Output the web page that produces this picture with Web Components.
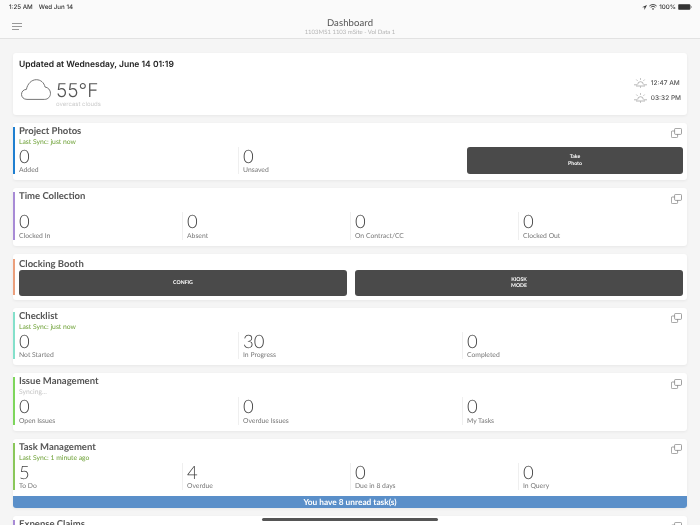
<!DOCTYPE html>
<html>
<head>
<meta charset="utf-8">
<title>Dashboard</title>
<style>
  html, body {
    margin: 0;
    height: 525px;
    overflow: hidden;
    background: #f5f5f5;
    font-family: Lato, "Liberation Sans", sans-serif;
  }
  body {
    text-rendering: geometricPrecision;
    filter: blur(.3px);
  }
  main-page {
    display: flex;
    flex-direction: column;
    gap: 8px;
    padding: 14px 13px 0;
  }
</style>
</head>
<body>
<app-header></app-header>
<main-page>
  <weather-card></weather-card>

  <dash-card accent="#1f7fd0" heading="Project Photos" sync="Last Sync: just now" copy>
    <dash-stats cols="3">
      <dash-stat value="0" label="Added"></dash-stat>
      <dash-stat value="0" label="Unsaved"></dash-stat>
      <dash-button>Take<br>Photo</dash-button>
    </dash-stats>
  </dash-card>

  <dash-card accent="#a88bd6" heading="Time Collection" sync=" " copy>
    <dash-stats cols="4">
      <dash-stat value="0" label="Clocked In"></dash-stat>
      <dash-stat value="0" label="Absent"></dash-stat>
      <dash-stat value="0" label="On Contract/CC"></dash-stat>
      <dash-stat value="0" label="Clocked Out"></dash-stat>
    </dash-stats>
  </dash-card>

  <dash-card accent="#eb9f7c" heading="Clocking Booth" compact>
    <button-pair>
      <dash-button>CONFIG</dash-button>
      <dash-button>KIOSK<br>MODE</dash-button>
    </button-pair>
  </dash-card>

  <dash-card accent="#84e0cb" heading="Checklist" sync="Last Sync: just now" copy>
    <dash-stats cols="3">
      <dash-stat value="0" label="Not Started"></dash-stat>
      <dash-stat value="30" label="In Progress"></dash-stat>
      <dash-stat value="0" label="Completed"></dash-stat>
    </dash-stats>
  </dash-card>

  <dash-card accent="#7ed65c" heading="Issue Management" sync="Syncing..." syncing copy>
    <dash-stats cols="3">
      <dash-stat value="0" label="Open Issues"></dash-stat>
      <dash-stat value="0" label="Overdue Issues"></dash-stat>
      <dash-stat value="0" label="My Tasks"></dash-stat>
    </dash-stats>
  </dash-card>

  <dash-card accent="#8ac75a" heading="Task Management" sync="Last Sync: 1 minute ago" banner="You have 8 unread task(s)" copy>
    <dash-stats cols="4">
      <dash-stat value="5" label="To Do"></dash-stat>
      <dash-stat value="4" label="Overdue"></dash-stat>
      <dash-stat value="0" label="Due in 8 days"></dash-stat>
      <dash-stat value="0" label="In Query"></dash-stat>
    </dash-stats>
  </dash-card>

  <dash-card accent="#a88bd6" heading="Expense Claims" sync=" " copy></dash-card>
</main-page>
<home-bar></home-bar>

<script>
// Top of the screen: status bar + title bar
class AppHeader extends HTMLElement {
  constructor() {
    super();
    this.attachShadow({ mode: 'open' });
    this.shadowRoot.innerHTML = `
    <style>
      :host {
        display: block;
        height: 38px;
        background: #fafafa;
        border-bottom: 1px solid #e2e2e2;
      }
      .status {
        display: flex;
        align-items: center;
        height: 14px;
        padding: 0 8px 0 9px;
        font: 500 6.2px Inter, sans-serif;
        color: #333;
      }
      .date { margin-left: 6px; }
      .right {
        margin-left: auto;
        display: flex;
        align-items: center;
        gap: 2px;
      }
      .bar {
        display: grid;
        grid-template-columns: 60px 1fr 60px;
        align-items: center;
        height: 24px;
      }
      .menu {
        display: flex;
        flex-direction: column;
        gap: 2px;
        padding-left: 12px;
      }
      .menu i {
        display: block;
        width: 10px;
        height: 1px;
        background: #999;
      }
      .menu i:last-child { width: 7px; }
      .titles {
        text-align: center;
        padding-top: 1px;
      }
      h1 {
        margin: 0;
        font: 400 9.5px/11px Lato, sans-serif;
        color: #555;
        letter-spacing: .1px;
      }
      p {
        margin: 0;
        font: 400 6px/7px Lato, sans-serif;
        color: #b5b5b5;
      }
    </style>
    <div class="status">
      <span>1:25 AM</span><span class="date">Wed Jun 14</span>
      <div class="right">
        <svg width="5" height="5" viewBox="0 0 5 5"><path d="M5 0 0 2.300h2.400V5z" fill="#333"/></svg>
        <svg width="8" height="6" viewBox="0 0 8 6" fill="none" stroke="#333" stroke-width=".9"><path d="M.4 2a5.200 5.200 0 0 1 7.200 0M1.700 3.300a3.300 3.300 0 0 1 4.600 0"/><path d="M4 6 2.900 4.700a1.600 1.600 0 0 1 2.200 0z" fill="#333" stroke="none"/></svg>
        <span>100%</span>
        <svg width="14" height="6" viewBox="0 0 14 6"><rect x=".3" y=".3" width="11.900" height="5.400" rx="1.200" fill="#333" stroke="#555" stroke-width=".5"/><rect x="12.800" y="2" width=".9" height="2" fill="#999"/></svg>
      </div>
    </div>
    <div class="bar">
      <div class="menu"><i></i><i></i><i></i></div>
      <div class="titles">
        <h1>Dashboard</h1>
        <p>1103MS1 1103 mSite - Vol Data 1</p>
      </div>
    </div>
    `;
  }
}

class WeatherCard extends HTMLElement {
  constructor() {
    super();
    this.attachShadow({ mode: 'open' });
    const sun = `<svg width="13" height="10" viewBox="0 0 13 10" fill="none" stroke="#888" stroke-width=".6">
      <path d="M3.700 6.500a2.800 2.800 0 0 1 5.600 0M0 6.800h3.200M9.800 6.800H13M2 8h9M6.500 .2v1.600M2.400 1.600l1.100 1.200M10.600 1.600 9.500 2.800M6.500 8.400v1.400"/>
    </svg>`;
    this.shadowRoot.innerHTML = `
    <style>
      :host {
        display: flex;
        justify-content: space-between;
        height: 61.5px;
        box-sizing: border-box;
        padding: 6px 6px 0;
        background: #fff;
        border-radius: 3px;
        box-shadow: 0 1px 3px rgba(0,0,0,.06);
      }
      h2 {
        margin: 0;
        font: 600 8.5px/12px Inter, sans-serif;
        color: #222;
      }
      .now {
        display: flex;
        align-items: flex-start;
        margin: 7px 0 0 2px;
        gap: 5px;
      }
      .temp {
        font: 300 19px/20px Inter, sans-serif;
        color: #555;
        padding-top: 3px;
      }
      .desc {
        font: 400 6px/8px Inter, sans-serif;
        color: #ccc;
      }
      .sun {
        align-self: flex-end;
        display: flex;
        flex-direction: column;
        gap: 5px;
        padding-bottom: 11.5px;
      }
      .sun div {
        display: flex;
        align-items: center;
        gap: 4px;
        font: 500 6.5px/10px Inter, sans-serif;
        color: #555;
      }
    </style>
    <div>
      <h2>Updated at Wednesday, June 14 01:19</h2>
      <div class="now">
        <svg width="30" height="21" viewBox="0 0 30 21" fill="none" stroke="#666" stroke-width=".9" style="margin-top:1px">
          <path d="M6 20.400C2.600 20.400.5 18 .5 15.400c0-2.800 2-4.900 4.900-5C6.500 4.800 10.500.7 15.300.7c4.400 0 7.800 2.900 8.700 7.300 3.100.4 5.500 3 5.500 6.300 0 3.400-2.600 6.100-5.900 6.100z"/>
        </svg>
        <div>
          <div class="temp">55°F</div>
          <div class="desc">overcast clouds</div>
        </div>
      </div>
    </div>
    <div class="sun">
      <div>${sun}<span>12:47 AM</span></div>
      <div>${sun}<span>03:32 PM</span></div>
    </div>
    `;
  }
}

// One module card: coloured strip, title, optional sync line, slot for the content
class DashCard extends HTMLElement {
  constructor() {
    super();
    this.attachShadow({ mode: 'open' });
  }

  connectedCallback() {
    const sync = this.getAttribute('sync');
    const banner = this.getAttribute('banner');
    const copy = `<svg class="copy" width="11" height="10" viewBox="0 0 11 10" fill="none" stroke="#777" stroke-width=".7">
      <rect x="3.600" y=".4" width="6.900" height="6" rx="1"/>
      <path d="M3.600 3H1.400a1 1 0 0 0-1 1v4.600a1 1 0 0 0 1 1h4.200a1 1 0 0 0 1-1V6.400"/>
    </svg>`;
    this.shadowRoot.innerHTML = `
    <style>
      :host {
        display: block;
        position: relative;
        background: #fff;
        border-radius: 3px;
        box-shadow: 0 1px 3px rgba(0,0,0,.06);
      }
      .main { display: flex; }
      .strip {
        flex: none;
        width: 2px;
        margin: 4px 0 6px;
        background: ${this.getAttribute('accent')};
      }
      .body {
        flex: 1;
        min-width: 0;
        padding: 4px 0 6px;
      }
      :host([compact]) .strip { margin: 5px 0; }
      :host([compact]) .body { padding: 5px 0 4px; }
      h3 {
        margin: 0 0 0 4px;
        font: 700 9.5px/10px Lato, sans-serif;
        color: #555;
      }
      :host([compact]) h3 { line-height: 11px; }
      .sync {
        margin-left: 4px;
        font: 400 6.8px/10px Lato, sans-serif;
        color: #6ca034;
        white-space: pre;
      }
      :host([syncing]) .sync { color: #c4c4c4; }
      .copy {
        position: absolute;
        top: 5.5px;
        right: 5px;
      }
      .banner {
        height: 12px;
        background: #5a8fc9;
        border-radius: 0 0 3px 3px;
        text-align: center;
        font: 700 8.3px/12px Lato, sans-serif;
        color: #fff;
      }
    </style>
    <div class="main">
      <div class="strip"></div>
      <div class="body">
        <h3>${this.getAttribute('heading')}</h3>
        ${sync ? `<div class="sync">${sync}</div>` : ''}
        <slot></slot>
      </div>
    </div>
    ${banner ? `<div class="banner">${banner}</div>` : ''}
    ${this.hasAttribute('copy') ? copy : ''}
    `;
  }
}

class DashStats extends HTMLElement {
  constructor() {
    super();
    this.attachShadow({ mode: 'open' });
  }

  connectedCallback() {
    this.shadowRoot.innerHTML = `
    <style>
      :host {
        display: grid;
        grid-template-columns: repeat(${this.getAttribute('cols')}, 1fr);
        height: 27.5px;
        margin: 0 1px 0 -1px;
      }
    </style>
    <slot></slot>
    `;
  }
}

class DashStat extends HTMLElement {
  constructor() {
    super();
    this.attachShadow({ mode: 'open' });
  }

  connectedCallback() {
    this.shadowRoot.innerHTML = `
    <style>
      :host {
        display: block;
        padding-left: 4px;
        border-left: 1px solid #efefef;
      }
      :host(:first-child) { border-left-color: transparent; }
      .value {
        font: 300 18.5px/19.5px Lato, sans-serif;
        color: #444;
      }
      .label {
        font: 400 6.8px/8px Lato, sans-serif;
        color: #777;
      }
    </style>
    <div class="value">${this.getAttribute('value')}</div>
    <div class="label">${this.getAttribute('label')}</div>
    `;
  }
}

class DashButton extends HTMLElement {
  constructor() {
    super();
    this.attachShadow({ mode: 'open' });
    this.shadowRoot.innerHTML = `
    <style>
      :host {
        display: flex;
        align-items: center;
        justify-content: center;
        box-sizing: border-box;
        min-height: 26px;
        padding-top: 1px;
        margin-left: 5px;
        margin-right: 3px;
        background: #4a4a4a;
        border-radius: 3px;
        text-align: center;
        font: 700 5.2px/6.5px Lato, sans-serif;
        color: #fff;
      }
      :host-context(button-pair) { margin: 0; }
    </style>
    <div><slot></slot></div>
    `;
  }
}

class ButtonPair extends HTMLElement {
  constructor() {
    super();
    this.attachShadow({ mode: 'open' });
    this.shadowRoot.innerHTML = `
    <style>
      :host {
        display: grid;
        grid-template-columns: 1fr 1fr;
        gap: 8px;
        margin: 0 4px;
      }
    </style>
    <slot></slot>
    `;
  }
}

// iPad home indicator, lies over the page
class HomeBar extends HTMLElement {
  constructor() {
    super();
    this.attachShadow({ mode: 'open' });
    this.shadowRoot.innerHTML = `
    <style>
      :host {
        position: fixed;
        left: 262px;
        top: 518px;
        width: 176px;
        height: 3px;
        border-radius: 2px;
        background: #555;
      }
    </style>
    `;
  }
}

class MainPage extends HTMLElement {
  constructor() {
    super();
    this.attachShadow({ mode: 'open' });
    this.shadowRoot.innerHTML = `<slot></slot>`;
  }
}

customElements.define('app-header', AppHeader);
customElements.define('weather-card', WeatherCard);
customElements.define('dash-card', DashCard);
customElements.define('dash-stats', DashStats);
customElements.define('dash-stat', DashStat);
customElements.define('dash-button', DashButton);
customElements.define('button-pair', ButtonPair);
customElements.define('home-bar', HomeBar);
customElements.define('main-page', MainPage);
</script>
</body>
</html>
